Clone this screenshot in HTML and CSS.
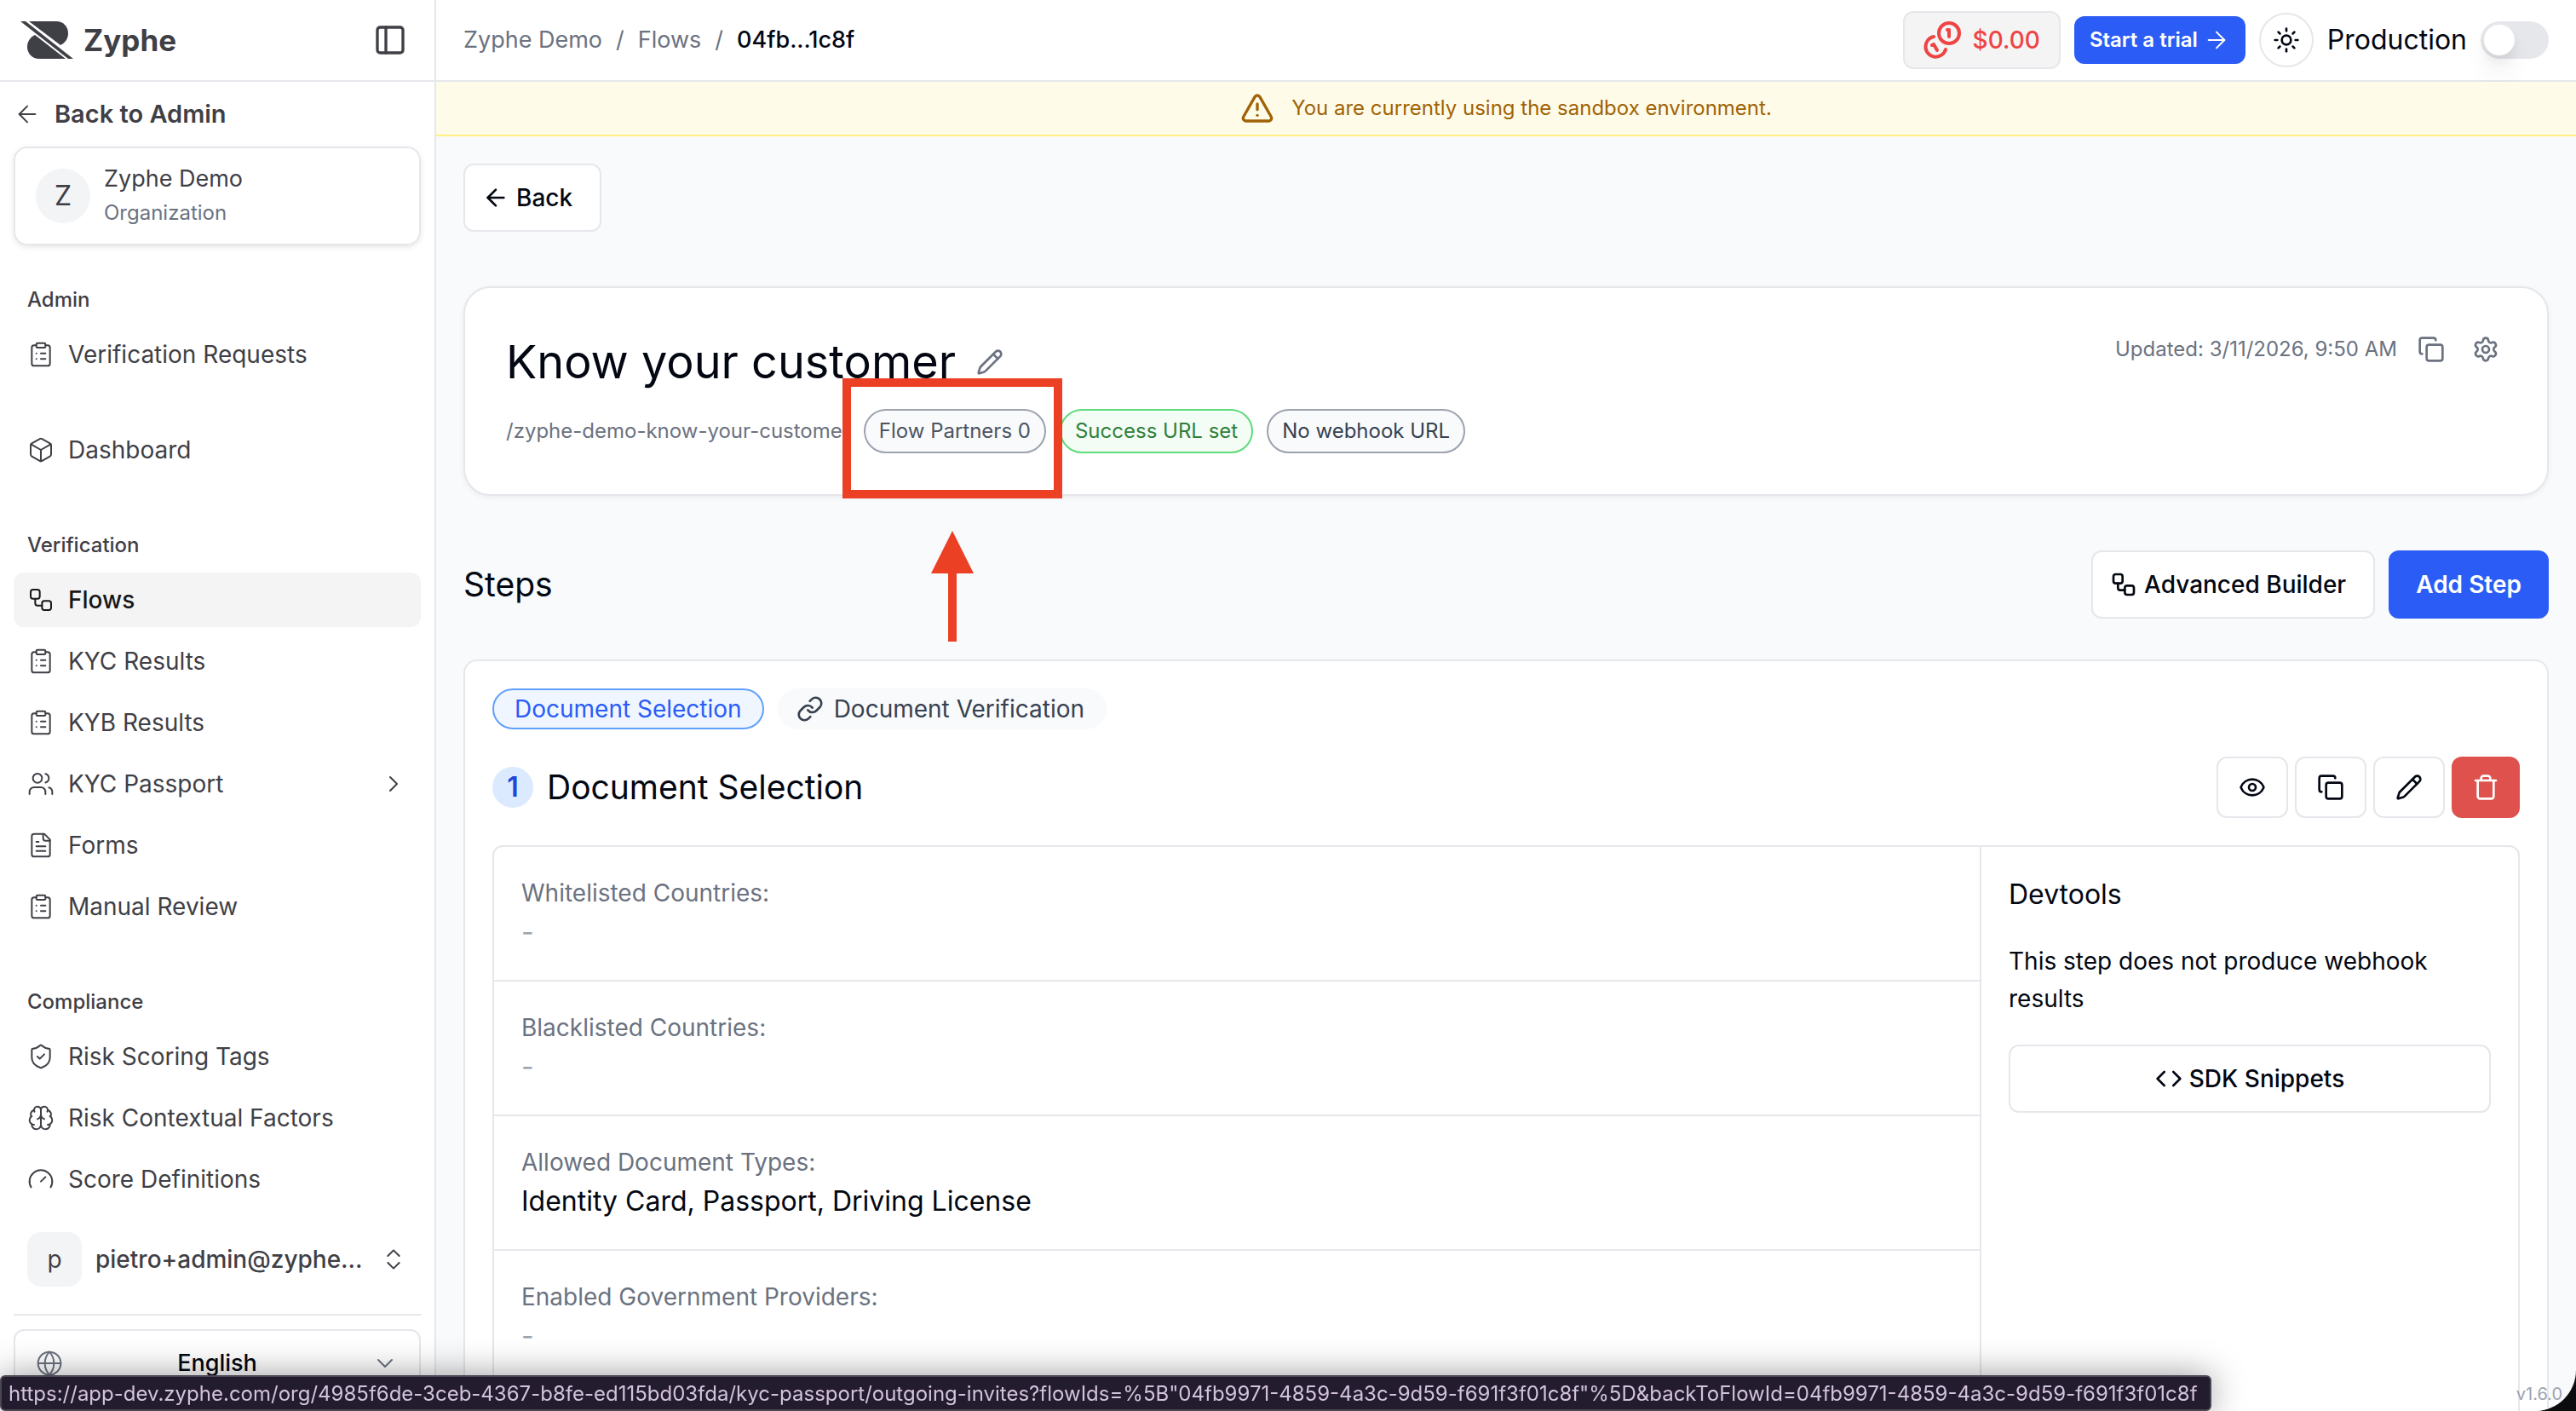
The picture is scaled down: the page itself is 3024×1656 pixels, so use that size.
FILE: index.html
```html
<!DOCTYPE html>
<html lang="en">
<head>
    <meta charset="UTF-8">
    <meta name="viewport" content="width=device-width, initial-scale=1">
    <title>Know your customer - Zyphe</title>
    <link rel="stylesheet" href="styles.css">
</head>
<body>
    <!-- icon sprite -->
    <svg class="sprite" aria-hidden="true">
        <symbol id="i-panel" viewBox="0 0 24 24"><rect width="18" height="18" x="3" y="3" rx="2"/><path d="M9 3v18"/></symbol>
        <symbol id="i-arrow-left" viewBox="0 0 24 24"><path d="m12 19-7-7 7-7"/><path d="M19 12H5"/></symbol>
        <symbol id="i-arrow-right" viewBox="0 0 24 24"><path d="M5 12h14"/><path d="m12 5 7 7-7 7"/></symbol>
        <symbol id="i-clipboard" viewBox="0 0 24 24"><rect width="8" height="4" x="8" y="2" rx="1"/><path d="M16 4h2a2 2 0 0 1 2 2v14a2 2 0 0 1-2 2H6a2 2 0 0 1-2-2V6a2 2 0 0 1 2-2h2"/><path d="M12 11h4"/><path d="M12 16h4"/><path d="M8 11h.01"/><path d="M8 16h.01"/></symbol>
        <symbol id="i-box" viewBox="0 0 24 24"><path d="M21 8a2 2 0 0 0-1-1.73l-7-4a2 2 0 0 0-2 0l-7 4A2 2 0 0 0 3 8v8a2 2 0 0 0 1 1.73l7 4a2 2 0 0 0 2 0l7-4A2 2 0 0 0 21 16Z"/><path d="m3.3 7 8.7 5 8.7-5"/><path d="M12 22V12"/></symbol>
        <symbol id="i-workflow" viewBox="0 0 24 24"><rect width="8" height="8" x="3" y="3" rx="2"/><path d="M7 11v4a2 2 0 0 0 2 2h4"/><rect width="8" height="8" x="13" y="13" rx="2"/></symbol>
        <symbol id="i-users" viewBox="0 0 24 24"><path d="M16 21v-2a4 4 0 0 0-4-4H6a4 4 0 0 0-4 4v2"/><circle cx="9" cy="7" r="4"/><path d="M22 21v-2a4 4 0 0 0-3-3.87"/><path d="M16 3.13a4 4 0 0 1 0 7.75"/></symbol>
        <symbol id="i-file" viewBox="0 0 24 24"><path d="M15 2H6a2 2 0 0 0-2 2v16a2 2 0 0 0 2 2h12a2 2 0 0 0 2-2V7Z"/><path d="M14 2v4a2 2 0 0 0 2 2h4"/><path d="M10 9H8"/><path d="M16 13H8"/><path d="M16 17H8"/></symbol>
        <symbol id="i-shield" viewBox="0 0 24 24"><path d="M20 13c0 5-3.5 7.5-7.66 8.95a1 1 0 0 1-.67-.01C7.5 20.5 4 18 4 13V6a1 1 0 0 1 1-1c2 0 4.5-1.2 6.24-2.72a1.17 1.17 0 0 1 1.52 0C14.51 3.81 17 5 19 5a1 1 0 0 1 1 1z"/><path d="m9 12 2 2 4-4"/></symbol>
        <symbol id="i-brain" viewBox="0 0 24 24"><path d="M12 5a3 3 0 1 0-5.997.125 4 4 0 0 0-2.526 5.77 4 4 0 0 0 .556 6.588A4 4 0 1 0 12 18Z"/><path d="M12 5a3 3 0 1 1 5.997.125 4 4 0 0 1 2.526 5.77 4 4 0 0 1-.556 6.588A4 4 0 1 1 12 18Z"/><path d="M15 13a4.5 4.5 0 0 1-3-4 4.5 4.5 0 0 1-3 4"/><path d="M17.599 6.5a3 3 0 0 0 .399-1.375"/><path d="M6.003 5.125A3 3 0 0 0 6.401 6.5"/><path d="M3.477 10.896a4 4 0 0 1 .585-.396"/><path d="M19.938 10.5a4 4 0 0 1 .585.396"/><path d="M6 18a4 4 0 0 1-1.967-.516"/><path d="M19.967 17.484A4 4 0 0 1 18 18"/></symbol>
        <symbol id="i-gauge" viewBox="0 0 24 24"><path d="m12 14 4-4"/><path d="M3.34 19a10 10 0 1 1 17.32 0"/></symbol>
        <symbol id="i-chevron-right" viewBox="0 0 24 24"><path d="m9 18 6-6-6-6"/></symbol>
        <symbol id="i-chevron-down" viewBox="0 0 24 24"><path d="m6 9 6 6 6-6"/></symbol>
        <symbol id="i-up-down" viewBox="0 0 24 24"><path d="m7 15 5 5 5-5"/><path d="m7 9 5-5 5 5"/></symbol>
        <symbol id="i-globe" viewBox="0 0 24 24"><circle cx="12" cy="12" r="10"/><path d="M12 2a14.5 14.5 0 0 0 0 20 14.5 14.5 0 0 0 0-20"/><path d="M2 12h20"/></symbol>
        <symbol id="i-sun" viewBox="0 0 24 24"><circle cx="12" cy="12" r="4"/><path d="M12 2v2"/><path d="M12 20v2"/><path d="m4.93 4.93 1.41 1.41"/><path d="m17.66 17.66 1.41 1.41"/><path d="M2 12h2"/><path d="M20 12h2"/><path d="m6.34 17.66-1.41 1.41"/><path d="m19.07 4.93-1.41 1.41"/></symbol>
        <symbol id="i-warning" viewBox="0 0 24 24"><path d="m21.73 18-8-14a2 2 0 0 0-3.48 0l-8 14A2 2 0 0 0 4 21h16a2 2 0 0 0 1.73-3"/><path d="M12 9v4"/><path d="M12 17h.01"/></symbol>
        <symbol id="i-pencil" viewBox="0 0 24 24"><path d="M21.174 6.812a1 1 0 0 0-3.986-3.987L3.842 16.174a2 2 0 0 0-.5.83l-1.321 4.352a.5.5 0 0 0 .623.622l4.353-1.32a2 2 0 0 0 .83-.497z"/><path d="m15 5 4 4"/></symbol>
        <symbol id="i-copy" viewBox="0 0 24 24"><rect width="14" height="14" x="8" y="8" rx="2"/><path d="M4 16c-1.1 0-2-.9-2-2V4c0-1.1.9-2 2-2h10c1.1 0 2 .9 2 2"/></symbol>
        <symbol id="i-gear" viewBox="0 0 24 24"><path d="M9.671 4.136a2.34 2.34 0 0 1 4.659 0 2.34 2.34 0 0 0 3.319 1.915 2.34 2.34 0 0 1 2.33 4.033 2.34 2.34 0 0 0 0 3.831 2.34 2.34 0 0 1-2.33 4.033 2.34 2.34 0 0 0-3.319 1.915 2.34 2.34 0 0 1-4.659 0 2.34 2.34 0 0 0-3.32-1.915 2.34 2.34 0 0 1-2.33-4.033 2.34 2.34 0 0 0 0-3.831A2.34 2.34 0 0 1 6.35 6.051a2.34 2.34 0 0 0 3.319-1.915"/><circle cx="12" cy="12" r="3"/></symbol>
        <symbol id="i-link" viewBox="0 0 24 24"><path d="M10 13a5 5 0 0 0 7.54.54l3-3a5 5 0 0 0-7.07-7.07l-1.72 1.71"/><path d="M14 11a5 5 0 0 0-7.54-.54l-3 3a5 5 0 0 0 7.07 7.07l1.71-1.71"/></symbol>
        <symbol id="i-eye" viewBox="0 0 24 24"><path d="M2.062 12.348a1 1 0 0 1 0-.696 10.75 10.75 0 0 1 19.876 0 1 1 0 0 1 0 .696 10.75 10.75 0 0 1-19.876 0"/><circle cx="12" cy="12" r="3"/></symbol>
        <symbol id="i-trash" viewBox="0 0 24 24"><path d="M3 6h18"/><path d="M19 6v14c0 1-1 2-2 2H7c-1 0-2-1-2-2V6"/><path d="M8 6V4c0-1 1-2 2-2h4c1 0 2 1 2 2v2"/></symbol>
        <symbol id="i-code" viewBox="0 0 24 24"><path d="m16 18 6-6-6-6"/><path d="m8 6-6 6 6 6"/></symbol>
        <symbol id="i-coins" viewBox="0 0 44 44"><circle cx="30" cy="14" r="12"/><path d="M12 18a12 12 0 1 0 14 15"/><path d="M28 10h2v8"/><path d="m10 28 2-1 4 7"/></symbol>
    </svg>

    <div class="app">
        <aside class="sidebar">
            <div class="sidebar-top">
                <a class="logo" href="#">
                    <svg class="logo-mark" viewBox="0 0 62 44" aria-hidden="true">
                        <path d="M0 0h6l56 44h-6z"/>
                        <path d="M10 0h32c8 0 14 6 14 14 0 6-3 11-9 14z"/>
                        <path d="M17 16 53 44H22C14 44 8 38 8 30c0-6 3-11 9-14z"/>
                    </svg>
                    <span>Zyphe</span>
                </a>
                <button type="button" aria-label="Toggle sidebar"><svg class="icon icon-lg"><use href="#i-panel"/></svg></button>
            </div>

            <div class="sidebar-org">
                <a class="back-admin" href="#"><svg class="icon"><use href="#i-arrow-left"/></svg>Back to Admin</a>
                <div class="org">
                    <span class="avatar round">Z</span>
                    <div>
                        <div class="org-name">Zyphe Demo</div>
                        <div class="org-type">Organization</div>
                    </div>
                </div>
            </div>

            <nav class="nav">
                <div class="nav-group">
                    <h2>Admin</h2>
                    <a href="#"><svg class="icon"><use href="#i-clipboard"/></svg>Verification Requests</a>
                </div>
                <div class="nav-group">
                    <a href="#"><svg class="icon"><use href="#i-box"/></svg>Dashboard</a>
                </div>
                <div class="nav-group">
                    <h2>Verification</h2>
                    <a class="active" href="#"><svg class="icon"><use href="#i-workflow"/></svg>Flows</a>
                    <a href="#"><svg class="icon"><use href="#i-clipboard"/></svg>KYC Results</a>
                    <a href="#"><svg class="icon"><use href="#i-clipboard"/></svg>KYB Results</a>
                    <a href="#"><svg class="icon"><use href="#i-users"/></svg>KYC Passport<svg class="icon push"><use href="#i-chevron-right"/></svg></a>
                    <a href="#"><svg class="icon"><use href="#i-file"/></svg>Forms</a>
                    <a href="#"><svg class="icon"><use href="#i-clipboard"/></svg>Manual Review</a>
                </div>
                <div class="nav-group">
                    <h2>Compliance</h2>
                    <a href="#"><svg class="icon"><use href="#i-shield"/></svg>Risk Scoring Tags</a>
                    <a href="#"><svg class="icon"><use href="#i-brain"/></svg>Risk Contextual Factors</a>
                    <a href="#"><svg class="icon"><use href="#i-gauge"/></svg>Score Definitions</a>
                </div>
            </nav>

            <div class="sidebar-bottom">
                <button class="user" type="button">
                    <span class="avatar">p</span>
                    <span>pietro+admin@zyphe...</span>
                    <svg class="icon push"><use href="#i-up-down"/></svg>
                </button>
                <hr>
                <div class="language">
                    <svg class="icon"><use href="#i-globe"/></svg>
                    <select aria-label="Language">
                        <option>English</option>
                    </select>
                    <svg class="icon"><use href="#i-chevron-down"/></svg>
                </div>
            </div>
        </aside>

        <div class="page">
            <header class="topbar">
                <nav class="crumbs">
                    <a href="#">Zyphe Demo</a>
                    <span>/</span>
                    <a href="#">Flows</a>
                    <span>/</span>
                    <span class="current">04fb...1c8f</span>
                </nav>
                <a class="credit" href="#"><svg class="coins"><use href="#i-coins"/></svg>$0.00</a>
                <button class="trial" type="button">Start a trial<svg class="icon"><use href="#i-arrow-right"/></svg></button>
                <button class="theme" type="button" aria-label="Theme"><svg class="icon bold"><use href="#i-sun"/></svg></button>
                <label class="env"><span>Production</span><input class="switch" type="checkbox"></label>
            </header>

            <div class="banner">
                <svg class="icon icon-lg"><use href="#i-warning"/></svg>
                <span>You are currently using the sandbox environment.</span>
            </div>

            <main class="main">
                <a class="btn btn-icon" href="#"><svg class="icon bold"><use href="#i-arrow-left"/></svg>Back</a>

                <section class="flow">
                    <div class="flow-info">
                        <div class="flow-title">
                            <h1>Know your customer</h1>
                            <button class="ghost" type="button" aria-label="Rename"><svg class="icon bold"><use href="#i-pencil"/></svg></button>
                        </div>
                        <div class="flow-meta">
                            <span class="slug">/zyphe-demo-know-your-customer</span>
                            <div class="callout">
                                <a class="badge" href="#">Flow Partners 0</a>
                                <div class="callout-box"></div>
                                <svg class="callout-arrow" viewBox="0 0 50 130" aria-hidden="true"><path d="M25 0 50 50H30v80H20V50H0z"/></svg>
                            </div>
                            <span class="badge success">Success URL set</span>
                            <span class="badge dark">No webhook URL</span>
                        </div>
                    </div>
                    <div class="flow-side">
                        <span>Updated: 3/11/2026, 9:50 AM</span>
                        <button class="ghost" type="button" aria-label="Copy"><svg class="icon bold"><use href="#i-copy"/></svg></button>
                        <button class="ghost" type="button" aria-label="Settings"><svg class="icon bold"><use href="#i-gear"/></svg></button>
                    </div>
                </section>

                <div class="steps-head">
                    <h2>Steps</h2>
                    <button class="btn btn-icon" type="button"><svg class="icon bold"><use href="#i-workflow"/></svg>Advanced Builder</button>
                    <button class="btn btn-primary" type="button">Add Step</button>
                </div>

                <section class="step">
                    <div class="tabs">
                        <button class="tab selected" type="button">Document Selection</button>
                        <button class="tab tab-icon" type="button"><svg class="icon bold"><use href="#i-link"/></svg>Document Verification</button>
                    </div>
                    <div class="step-head">
                        <span class="step-number">1</span>
                        <h3>Document Selection</h3>
                        <button class="tool" type="button" aria-label="Preview"><svg class="icon bold"><use href="#i-eye"/></svg></button>
                        <button class="tool" type="button" aria-label="Duplicate"><svg class="icon bold"><use href="#i-copy"/></svg></button>
                        <button class="tool" type="button" aria-label="Edit"><svg class="icon bold"><use href="#i-pencil"/></svg></button>
                        <button class="tool danger" type="button" aria-label="Delete"><svg class="icon bold"><use href="#i-trash"/></svg></button>
                    </div>
                    <div class="step-body">
                        <dl class="fields">
                            <div><dt>Whitelisted Countries:</dt><dd class="empty">-</dd></div>
                            <div><dt>Blacklisted Countries:</dt><dd class="empty">-</dd></div>
                            <div><dt>Allowed Document Types:</dt><dd>Identity Card, Passport, Driving License</dd></div>
                            <div><dt>Enabled Government Providers:</dt><dd class="empty">-</dd></div>
                        </dl>
                        <div class="devtools">
                            <h4>Devtools</h4>
                            <p>This step does not produce webhook results</p>
                            <button class="btn" type="button"><svg class="icon bold"><use href="#i-code"/></svg>SDK Snippets</button>
                        </div>
                    </div>
                </section>
            </main>
        </div>

        <div class="version">v1.6.0</div>
    </div>

    <div class="status">https://app-dev.zyphe.com/org/4985f6de-3ceb-4367-b8fe-ed115bd03fda/kyc-passport/outgoing-invites?flowIds=%5B"04fb9971-4859-4a3c-9d59-f691f3f01c8f"%5D&amp;backToFlowId=04fb9971-4859-4a3c-9d59-f691f3f01c8f</div>
</body>
</html>
```

FILE: styles.css
```css
* {
    box-sizing: border-box;
    margin: 0;
    padding: 0;
}

html {
    background: #0b0c0e;
}

body {
    font-family: Inter, "Liberation Sans", sans-serif;
    font-size: 28px;
    line-height: 40px;
    color: #030712;
    overflow: hidden;
}

a {
    color: inherit;
    text-decoration: none;
}

button,
select {
    font: inherit;
    color: inherit;
    background: none;
    border: 0;
}

h1, h2, h3, h4 {
    font-weight: 400;
}

.sprite {
    position: absolute;
    width: 0;
    height: 0;
}

.icon {
    flex: none;
    display: block;
    width: 32px;
    height: 32px;
    fill: none;
    stroke: currentColor;
    stroke-width: 1.5;
    stroke-linecap: round;
    stroke-linejoin: round;
}

.icon.bold {
    stroke-width: 2;
}

.icon-lg {
    width: 40px;
    height: 40px;
    stroke-width: 2;
}

.push {
    margin-left: auto;
}

.app {
    position: relative;
    display: flex;
    height: 100vh;
    overflow: hidden;
    background: #f9fafb;
    border-bottom-right-radius: 48px;
}

/* sidebar */
.sidebar {
    flex: none;
    display: flex;
    flex-direction: column;
    width: 512px;
    background: #fff;
    border-right: 2px solid #e5e7eb;
    color: #3f3f46;
}

.sidebar-top {
    flex: none;
    display: flex;
    align-items: center;
    justify-content: space-between;
    height: 96px;
    padding: 0 32px 0 24px;
    border-bottom: 2px solid #e5e7eb;
}

.logo {
    display: flex;
    align-items: center;
    gap: 12px;
    font-size: 35px;
    font-weight: 700;
}

.logo-mark {
    width: 62px;
    height: 44px;
    fill: currentColor;
}

.sidebar-org {
    padding: 16px 16px 0;
}

.back-admin {
    display: flex;
    align-items: center;
    gap: 16px;
    height: 44px;
    margin-bottom: 16px;
    font-size: 29px;
    font-weight: 600;
}

.org {
    display: flex;
    align-items: center;
    gap: 16px;
    height: 116px;
    padding: 0 24px;
    border: 2px solid #e5e7eb;
    border-radius: 16px;
    box-shadow: 0 2px 6px rgba(0, 0, 0, .1);
}

.org-name {
    font-size: 27px;
}

.org-type {
    font-size: 24px;
    color: #6b7280;
}

.avatar {
    flex: none;
    width: 64px;
    height: 64px;
    border-radius: 16px;
    background: #f3f4f6;
    line-height: 64px;
    text-align: center;
}

.avatar.round {
    border-radius: 50%;
    font-size: 32px;
}

.nav {
    display: flex;
    flex-direction: column;
    gap: 48px;
    padding: 32px 16px 0;
}

.nav-group {
    display: flex;
    flex-direction: column;
    gap: 8px;
}

.nav-group h2 {
    height: 56px;
    padding: 0 16px;
    font-size: 24px;
    font-weight: 500;
    line-height: 64px;
}

.nav-group a {
    display: flex;
    align-items: center;
    gap: 16px;
    height: 64px;
    padding: 0 16px;
    border-radius: 12px;
}

.nav-group .active {
    background: #f4f4f4;
    color: #18181b;
    font-weight: 500;
}

.sidebar-bottom {
    margin-top: auto;
    padding: 0 16px 16px;
}

.sidebar-bottom hr {
    height: 2px;
    margin: 32px 0 16px;
    border: 0;
    background: #e5e7eb;
}

.user {
    display: flex;
    align-items: center;
    gap: 16px;
    width: 100%;
    padding: 0 16px;
    font-weight: 500;
}

.user .avatar {
    font-weight: 400;
}

.language {
    display: flex;
    align-items: center;
    height: 80px;
    padding: 0 24px;
    border: 2px solid #e5e7eb;
    border-radius: 12px;
    color: #6b7280;
}

.language select {
    flex: 1;
    appearance: none;
    color: #030712;
    font-size: 27px;
    font-weight: 500;
    text-align-last: center;
}

/* header */
.page {
    flex: 1;
    min-width: 0;
    display: flex;
    flex-direction: column;
}

.topbar {
    flex: none;
    display: flex;
    align-items: center;
    gap: 16px;
    height: 96px;
    padding: 0 32px;
    background: #fff;
    border-bottom: 2px solid #e5e7eb;
}

.crumbs {
    display: flex;
    gap: 16px;
    margin-right: auto;
    color: #6b7280;
    font-size: 27px;
}

.crumbs .current {
    color: #030712;
    font-weight: 500;
}

.credit {
    display: flex;
    align-items: center;
    gap: 14px;
    height: 68px;
    padding: 0 22px;
    border: 2px solid #e5e7eb;
    border-radius: 12px;
    background: #f4f4f4;
    color: #ef4444;
    font-weight: 500;
}

.coins {
    width: 44px;
    height: 44px;
    fill: none;
    stroke: currentColor;
    stroke-width: 4;
    stroke-linecap: round;
    stroke-linejoin: round;
}

.trial {
    display: flex;
    align-items: center;
    gap: 6px;
    height: 56px;
    padding: 0 18px;
    border-radius: 12px;
    background: #2b5cf5;
    color: #fff;
    font-size: 24px;
    font-weight: 600;
}

.theme {
    display: flex;
    align-items: center;
    justify-content: center;
    width: 64px;
    height: 64px;
    border: 2px solid #e5e7eb;
    border-radius: 50%;
}

.env {
    display: flex;
    align-items: center;
    gap: 16px;
    font-size: 32px;
}

.switch {
    appearance: none;
    width: 80px;
    height: 44px;
    padding: 4px;
    border-radius: 22px;
    background: #e5e7eb;
}

.switch::before {
    content: "";
    display: block;
    width: 36px;
    height: 36px;
    border-radius: 50%;
    background: #fff;
    box-shadow: 0 20px 30px rgba(0, 0, 0, .06), 0 8px 12px rgba(0, 0, 0, .06);
}

.switch:checked::before {
    margin-left: auto;
}

.banner {
    flex: none;
    display: flex;
    align-items: center;
    justify-content: center;
    gap: 20px;
    height: 64px;
    background: #fefce8;
    border-bottom: 2px solid #fff085;
    color: #a16207;
    font-size: 24px;
}

/* content */
.main {
    flex: 1;
    min-height: 0;
    overflow: hidden;
    padding: 32px;
}

.btn {
    display: flex;
    align-items: center;
    justify-content: center;
    gap: 8px;
    height: 80px;
    padding: 0 32px;
    border: 2px solid #e5e7eb;
    border-radius: 12px;
    background: #fff;
    font-weight: 500;
}

.btn-icon {
    width: fit-content;
    padding-left: 20px;
}

.btn-primary {
    border: 0;
    background: #2b5cf5;
    color: #fff;
    font-weight: 600;
}

.flow {
    display: flex;
    align-items: flex-start;
    justify-content: space-between;
    margin: 64px 0;
    padding: 48px;
    border: 2px solid #e5e7eb;
    border-radius: 32px;
    background: #fff;
    box-shadow: 0 2px 6px rgba(0, 0, 0, .06);
}

.flow-title {
    display: flex;
    align-items: center;
    gap: 16px;
    height: 78px;
    margin-bottom: 16px;
}

.flow-title h1 {
    font-size: 54px;
}

.ghost {
    display: flex;
    align-items: center;
    justify-content: center;
    width: 48px;
    height: 48px;
    color: #6b7280;
}

.flow-meta {
    display: flex;
    align-items: center;
    gap: 16px;
    font-size: 24px;
}

.slug {
    color: #6b7280;
}

.badge {
    display: block;
    padding: 4px 16px;
    border: 2px solid #9ca3af;
    border-radius: 26px;
    background: #f9fafb;
    color: #4b5563;
}

.badge.success {
    border-color: #5edb7b;
    background: #f3fdf5;
    color: #2f7f3a;
}

.badge.dark {
    color: #374151;
}

.callout {
    position: relative;
}

.callout-box {
    position: absolute;
    top: -36px;
    right: -19px;
    bottom: -53px;
    left: -25px;
    border: 10px solid #eb4024;
    z-index: 1;
}

.callout-arrow {
    position: absolute;
    top: 143px;
    left: calc(50% - 28px);
    width: 50px;
    height: 130px;
    fill: #eb4024;
}

.flow-side {
    display: flex;
    align-items: center;
    gap: 16px;
    color: #6b7280;
    font-size: 24px;
}

.steps-head {
    display: flex;
    align-items: center;
    gap: 16px;
    margin-bottom: 48px;
}

.steps-head h2 {
    margin-right: auto;
    font-size: 39px;
}

.step {
    padding: 32px;
    border: 2px solid #e5e7eb;
    border-radius: 16px;
    background: #fff;
}

.tabs {
    display: flex;
    gap: 16px;
    margin-bottom: 32px;
}

.tab {
    display: flex;
    align-items: center;
    gap: 12px;
    height: 48px;
    padding: 0 24px;
    border: 2px solid #f9fafb;
    border-radius: 24px;
    background: #f9fafb;
    color: #374151;
}

.tab-icon {
    padding-left: 20px;
}

.tab.selected {
    border-color: #60a0fa;
    background: #eff6ff;
    color: #2b5cf5;
}

.step-head {
    display: flex;
    align-items: center;
    gap: 8px;
    margin-bottom: 32px;
}

.step-number {
    width: 48px;
    height: 48px;
    border-radius: 50%;
    background: #dbeafe;
    color: #2445d8;
    font-size: 32px;
    font-weight: 600;
    line-height: 48px;
    text-align: center;
}

.step-head h3 {
    margin: 0 auto 0 8px;
    font-size: 39px;
}

.tool {
    display: flex;
    align-items: center;
    justify-content: center;
    width: 84px;
    height: 72px;
    border: 2px solid #e5e7eb;
    border-radius: 12px;
}

.tool.danger {
    width: 80px;
    border: 0;
    background: #de514c;
    color: #fff;
}

.step-body {
    display: grid;
    grid-template-columns: 1fr 632px;
    min-height: 720px;
    border: 2px solid #e5e7eb;
    border-radius: 12px;
}

.fields > div {
    padding: 32px;
    border-bottom: 2px solid #e5e7eb;
}

.fields dt {
    color: #6b7280;
    line-height: 44px;
}

.fields dd {
    font-size: 32px;
    line-height: 48px;
}

.fields .empty {
    color: #9ca3af;
}

.devtools {
    padding: 32px;
    border-left: 2px solid #e5e7eb;
}

.devtools h4 {
    font-size: 32px;
    line-height: 48px;
}

.devtools p {
    margin: 32px 0;
    line-height: 44px;
}

.devtools .btn {
    width: 100%;
}

.version {
    position: absolute;
    right: 16px;
    bottom: 0;
    font-size: 20px;
    color: #9ca3af;
}

/* link address shown while hovering */
.status {
    position: fixed;
    left: 0;
    bottom: 0;
    height: 42px;
    padding: 0 14px 0 8px;
    border: 2px solid #4a4652;
    border-radius: 6px;
    background: #231b2e;
    box-shadow: 0 0 40px rgba(0, 0, 0, .4);
    color: #d2c3dc;
    font-size: 24px;
    line-height: 40px;
    white-space: nowrap;
}
```
